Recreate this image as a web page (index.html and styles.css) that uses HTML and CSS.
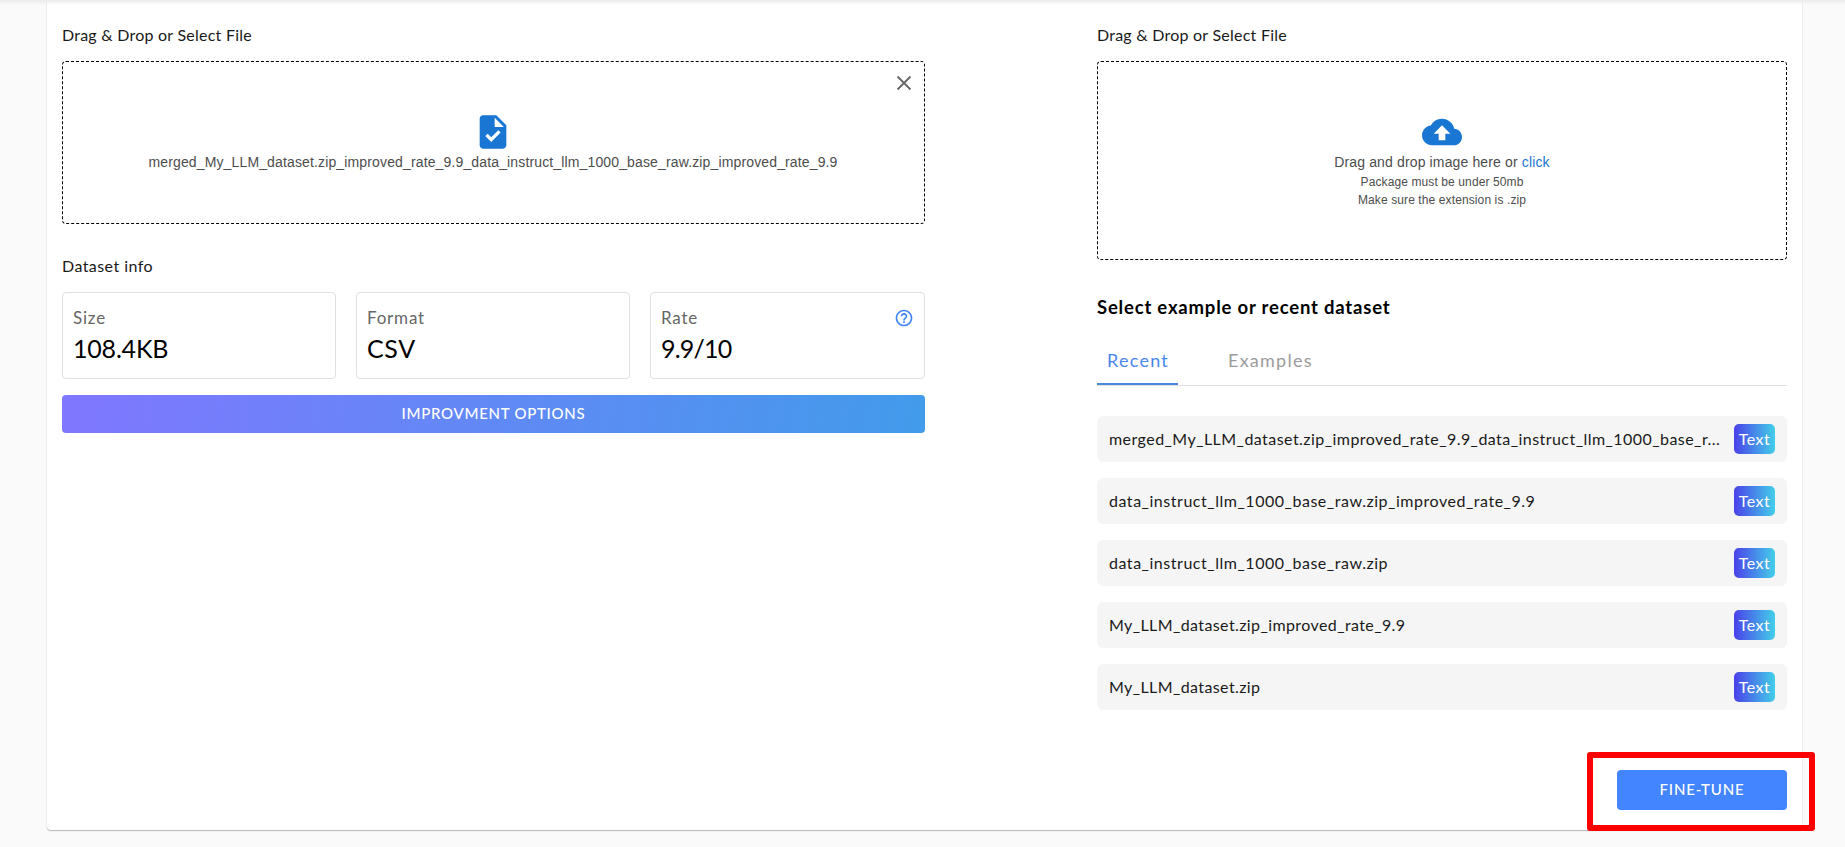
FILE: index.html
```
<!DOCTYPE html>
<html lang="en">
<head>
<meta charset="utf-8">
<title>Fine-tune</title>
<link rel="stylesheet" href="styles.css">
</head>
<body>
<div class="topbar-shadow"></div>
<main class="card">
  <section class="left">
    <h2 class="label">Drag &amp; Drop or Select File</h2>
    <div class="dropzone dropzone-file">
      <svg class="icon" viewBox="0 0 24 24"><path d="M14 2H6c-1.1 0-1.99.9-1.99 2L4 20c0 1.1.89 2 1.99 2H18c1.1 0 2-.9 2-2V8l-6-6zm-3.06 16L7.4 14.46l1.41-1.41 2.12 2.12 4.24-4.24 1.41 1.41L10.94 18zM13 9V3.5L18.5 9H13z"/></svg>
      <p class="zone-text">merged_My_LLM_dataset.zip_improved_rate_9.9_data_instruct_llm_1000_base_raw.zip_improved_rate_9.9</p>
      <svg class="close" viewBox="0 0 24 24"><path d="M5.5 5.5l13 13M18.5 5.5l-13 13"/></svg>
    </div>
    <h2 class="label label-info">Dataset info</h2>
    <div class="stats">
      <div class="stat">
        <div class="stat-name">Size</div>
        <div class="stat-value">108.4KB</div>
      </div>
      <div class="stat">
        <div class="stat-name">Format</div>
        <div class="stat-value stat-format">CSV</div>
      </div>
      <div class="stat">
        <div class="stat-name">Rate
          <svg class="help" viewBox="0 0 24 24"><path d="M11 18h2v-2h-2v2zm1-16C6.48 2 2 6.48 2 12s4.48 10 10 10 10-4.48 10-10S17.52 2 12 2zm0 18c-4.41 0-8-3.59-8-8s3.59-8 8-8 8 3.59 8 8-3.59 8-8 8zm0-14c-2.21 0-4 1.79-4 4h2c0-1.1.9-2 2-2s2 .9 2 2c0 2-3 1.75-3 5h2c0-2.25 3-2.5 3-5 0-2.21-1.79-4-4-4z"/></svg>
        </div>
        <div class="stat-value stat-rate">9.9/10</div>
      </div>
    </div>
    <button class="improve">IMPROVMENT OPTIONS</button>
  </section>
  <section class="right">
    <h2 class="label">Drag &amp; Drop or Select File</h2>
    <div class="dropzone dropzone-image">
      <svg class="icon" viewBox="0 0 24 24"><path d="M19.35 10.04C18.67 6.59 15.64 4 12 4 9.11 4 6.6 5.64 5.35 8.04 2.34 8.36 0 10.91 0 14c0 3.31 2.69 6 6 6h13c2.76 0 5-2.24 5-5 0-2.64-2.05-4.78-4.65-4.96zM14 13v4h-4v-4H7l5-5 5 5h-3z"/></svg>
      <p class="zone-text">Drag and drop image here or <a class="link">click</a></p>
      <p class="zone-hint">Package must be under 50mb</p>
      <p class="zone-hint">Make sure the extension is .zip</p>
    </div>
    <h3 class="heading">Select example or recent dataset</h3>
    <nav class="tabs">
      <a class="tab tab-active">Recent</a>
      <a class="tab">Examples</a>
    </nav>
    <ul class="list">
      <li class="row"><span class="name name-long">merged_My_LLM_dataset.zip_improved_rate_9.9_data_instruct_llm_1000_base_r...</span><span class="badge">Text</span></li>
      <li class="row"><span class="name name-wide">data_instruct_llm_1000_base_raw.zip_improved_rate_9.9</span><span class="badge">Text</span></li>
      <li class="row"><span class="name name-wide">data_instruct_llm_1000_base_raw.zip</span><span class="badge">Text</span></li>
      <li class="row"><span class="name">My_LLM_dataset.zip_improved_rate_9.9</span><span class="badge">Text</span></li>
      <li class="row"><span class="name">My_LLM_dataset.zip</span><span class="badge">Text</span></li>
    </ul>
    <div class="actions">
      <button class="submit">FINE-TUNE</button>
      <div class="highlight"></div>
    </div>
  </section>
</main>
</body>
</html>
```
FILE: styles.css
```
* { box-sizing: border-box; }
body {
  margin: 0;
  height: 847px;
  overflow: hidden;
  background: #fafafa;
  color: #000;
  font-family: Lato, "Open Sans", sans-serif;
}
h2, h3, p, ul { margin: 0; padding: 0; }
button { border: 0; padding: 0 0 2px; font-family: inherit; color: #fff; }
.topbar-shadow {
  position: absolute;
  top: 0;
  left: 0;
  width: 100%;
  height: 5px;
  background: linear-gradient(#ebebeb, rgba(255, 255, 255, 0));
}
.card {
  display: flex;
  justify-content: space-between;
  width: 1755px;
  height: 830px;
  margin-left: 47px;
  padding: 24px 15px 0;
  background: #fff;
  border-radius: 0 0 4px 4px;
  box-shadow: 0 1px 1px rgba(0, 0, 0, .24), 0 0 2px rgba(0, 0, 0, .12);
}
.left { width: 863px; }
.right { width: 690px; }
.label {
  height: 37px;
  color: #1a1a1a;
  font-size: 16px;
  font-weight: 400;
  line-height: 22px;
  letter-spacing: .24px;
}
.label-info { margin-top: 31px; letter-spacing: .44px; }
.dropzone {
  position: relative;
  display: flex;
  flex-direction: column;
  align-items: center;
  padding-top: 50px;
  border: 1px dashed #000;
  border-radius: 4px;
  color: #4d4d4d;
  font-family: "Liberation Sans", Arial, sans-serif;
}
.dropzone-file { height: 163px; padding-right: 1px; }
.dropzone-image { height: 199px; }
.icon { width: 40px; height: 40px; fill: #1976d2; }
.zone-text { font-size: 14px; line-height: 20px; letter-spacing: .14px; }
.zone-hint { position: relative; top: 1px; font-size: 12px; line-height: 18px; letter-spacing: .11px; }
.link { color: #1976d2; }
.close {
  position: absolute;
  top: 9px;
  right: 8px;
  width: 24px;
  height: 24px;
  fill: none;
  stroke: #666;
  stroke-width: 1.8;
}
.stats { display: grid; grid-template-columns: 274px 274px 275px; gap: 20px; }
.stat {
  height: 87px;
  padding: 13px 10px 0;
  border: 1px solid #e0e0e0;
  border-radius: 4px;
}
.stat-name {
  display: flex;
  justify-content: space-between;
  align-items: center;
  font-size: 17px;
  line-height: 24px;
  letter-spacing: .8px;
  color: #666;
}
.help { width: 20px; height: 20px; fill: #4285f4; }
.stat-value { margin-top: 1px; font-size: 25px; line-height: 34px; letter-spacing: -.2px; }
.stat-format { letter-spacing: .6px; }
.stat-rate { letter-spacing: -.8px; }
.improve {
  display: block;
  width: 100%;
  height: 38px;
  margin-top: 16px;
  border-radius: 4px;
  background: linear-gradient(100deg, #8077ff, #429beb);
  font-size: 15px;
  font-weight: 500;
  letter-spacing: .72px;
}
.heading {
  margin-top: 35px;
  font-size: 18.5px;
  font-weight: 700;
  line-height: 24px;
  letter-spacing: .8px;
}
.tabs {
  display: flex;
  gap: 40px;
  height: 48px;
  margin-top: 19px;
  border-bottom: 1px solid #e0e0e0;
}
.tab {
  height: 47px;
  padding: 0 10px;
  color: #9b9b9b;
  font-size: 18px;
  line-height: 45px;
  letter-spacing: 1.25px;
}
.tab-active { width: 81px; border-bottom: 2px solid #4a86e0; color: #4a86f0; }
.list { display: grid; gap: 16px; margin-top: 30px; list-style: none; }
.row {
  display: flex;
  align-items: center;
  height: 46px;
  padding: 0 12px;
  border-radius: 6px;
  background: #f5f5f5;
  font-size: 16px;
}
.name { padding-bottom: 2px; color: #1a1a1a; white-space: nowrap; letter-spacing: .4px; }
.name-long { letter-spacing: .45px; }
.name-wide { letter-spacing: .53px; }
.badge {
  width: 41px;
  height: 30px;
  margin-left: auto;
  border-radius: 5px;
  background: linear-gradient(90deg, #4a41ea, #43cfe9);
  color: #fff;
  line-height: 29px;
  letter-spacing: .5px;
  text-align: center;
}
.actions { position: relative; display: flex; justify-content: flex-end; margin-top: 60px; }
.submit {
  width: 170px;
  height: 40px;
  border-radius: 4px;
  background: #4285ff;
  font-size: 15px;
  font-weight: 500;
  letter-spacing: .8px;
}
.highlight {
  position: absolute;
  top: -18px;
  right: -28px;
  width: 228px;
  height: 79px;
  border: 6px solid #f00;
  border-radius: 3px;
}
```
